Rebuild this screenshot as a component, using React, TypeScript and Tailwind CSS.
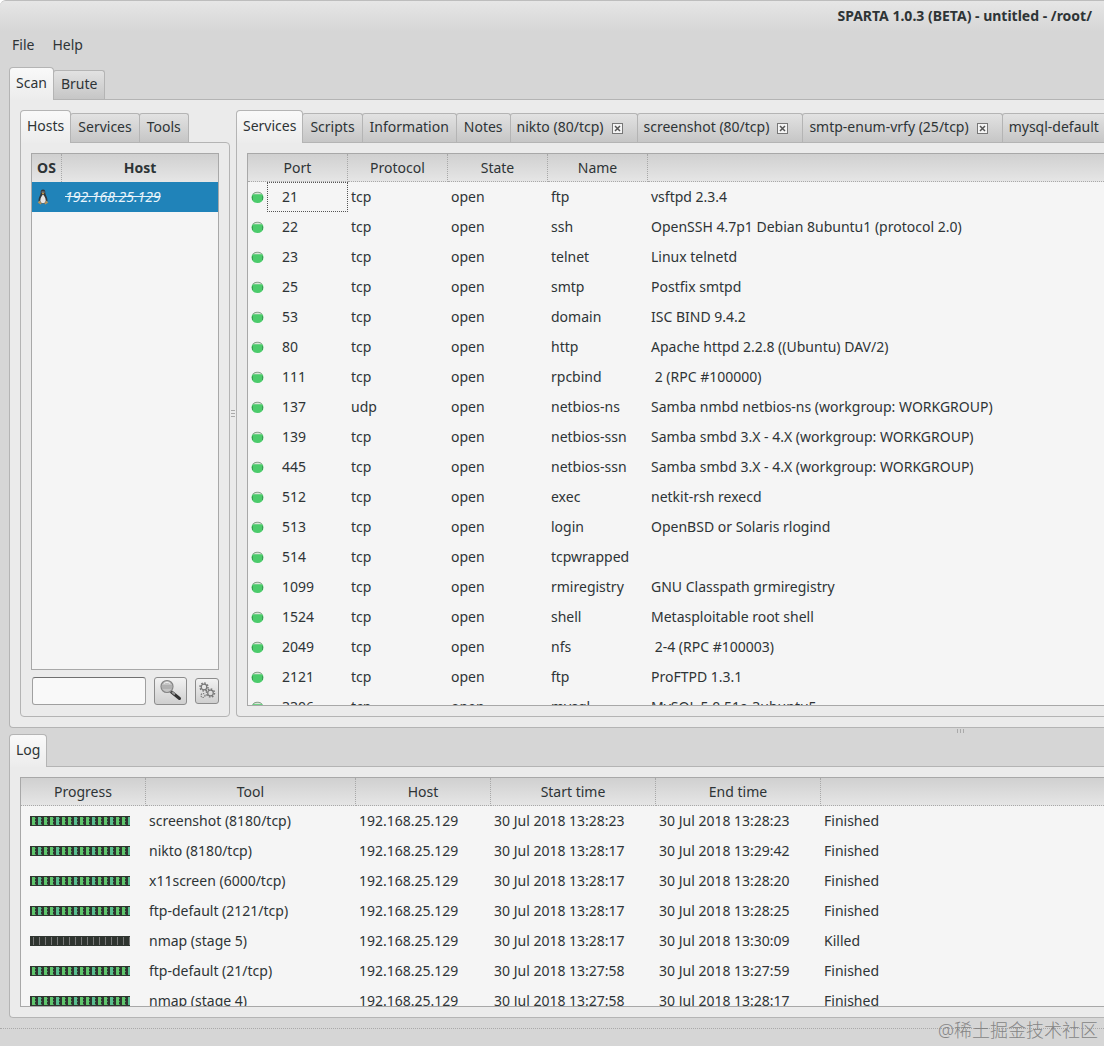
import React, { useState } from 'react';

type Service = { port: string; protocol: string; state: string; name: string; version: string };
type LogEntry = { tool: string; host: string; start: string; end: string; status: string };

const HOST = '192.168.25.129';

const services: Service[] = [
  { port: '21', protocol: 'tcp', state: 'open', name: 'ftp', version: 'vsftpd 2.3.4' },
  { port: '22', protocol: 'tcp', state: 'open', name: 'ssh', version: 'OpenSSH 4.7p1 Debian 8ubuntu1 (protocol 2.0)' },
  { port: '23', protocol: 'tcp', state: 'open', name: 'telnet', version: 'Linux telnetd' },
  { port: '25', protocol: 'tcp', state: 'open', name: 'smtp', version: 'Postfix smtpd' },
  { port: '53', protocol: 'tcp', state: 'open', name: 'domain', version: 'ISC BIND 9.4.2' },
  { port: '80', protocol: 'tcp', state: 'open', name: 'http', version: 'Apache httpd 2.2.8 ((Ubuntu) DAV/2)' },
  { port: '111', protocol: 'tcp', state: 'open', name: 'rpcbind', version: ' 2 (RPC #100000)' },
  { port: '137', protocol: 'udp', state: 'open', name: 'netbios-ns', version: 'Samba nmbd netbios-ns (workgroup: WORKGROUP)' },
  { port: '139', protocol: 'tcp', state: 'open', name: 'netbios-ssn', version: 'Samba smbd 3.X - 4.X (workgroup: WORKGROUP)' },
  { port: '445', protocol: 'tcp', state: 'open', name: 'netbios-ssn', version: 'Samba smbd 3.X - 4.X (workgroup: WORKGROUP)' },
  { port: '512', protocol: 'tcp', state: 'open', name: 'exec', version: 'netkit-rsh rexecd' },
  { port: '513', protocol: 'tcp', state: 'open', name: 'login', version: 'OpenBSD or Solaris rlogind' },
  { port: '514', protocol: 'tcp', state: 'open', name: 'tcpwrapped', version: '' },
  { port: '1099', protocol: 'tcp', state: 'open', name: 'rmiregistry', version: 'GNU Classpath grmiregistry' },
  { port: '1524', protocol: 'tcp', state: 'open', name: 'shell', version: 'Metasploitable root shell' },
  { port: '2049', protocol: 'tcp', state: 'open', name: 'nfs', version: ' 2-4 (RPC #100003)' },
  { port: '2121', protocol: 'tcp', state: 'open', name: 'ftp', version: 'ProFTPD 1.3.1' },
  { port: '3306', protocol: 'tcp', state: 'open', name: 'mysql', version: 'MySQL 5.0.51a-3ubuntu5' },
];

const logEntries: LogEntry[] = [
  { tool: 'screenshot (8180/tcp)', host: HOST, start: '30 Jul 2018 13:28:23', end: '30 Jul 2018 13:28:23', status: 'Finished' },
  { tool: 'nikto (8180/tcp)', host: HOST, start: '30 Jul 2018 13:28:17', end: '30 Jul 2018 13:29:42', status: 'Finished' },
  { tool: 'x11screen (6000/tcp)', host: HOST, start: '30 Jul 2018 13:28:17', end: '30 Jul 2018 13:28:20', status: 'Finished' },
  { tool: 'ftp-default (2121/tcp)', host: HOST, start: '30 Jul 2018 13:28:17', end: '30 Jul 2018 13:28:25', status: 'Finished' },
  { tool: 'nmap (stage 5)', host: HOST, start: '30 Jul 2018 13:28:17', end: '30 Jul 2018 13:30:09', status: 'Killed' },
  { tool: 'ftp-default (21/tcp)', host: HOST, start: '30 Jul 2018 13:27:58', end: '30 Jul 2018 13:27:59', status: 'Finished' },
  { tool: 'nmap (stage 4)', host: HOST, start: '30 Jul 2018 13:27:58', end: '30 Jul 2018 13:28:17', status: 'Finished' },
];

const serviceTabs = [
  { label: 'Services' },
  { label: 'Scripts' },
  { label: 'Information' },
  { label: 'Notes' },
  { label: 'nikto (80/tcp)', closable: true },
  { label: 'screenshot (80/tcp)', closable: true },
  { label: 'smtp-enum-vrfy (25/tcp)', closable: true },
  { label: 'mysql-default', closable: true },
];

type TabProps = { label: string; active?: boolean; closable?: boolean; onClick?: () => void };

const Tab: React.FC<TabProps> = ({ label, active, closable, onClick }) => (
  <div
    className={
      active
        ? 'relative z-10 -mb-px flex h-[33px] shrink-0 items-center gap-2 rounded-t-[4px] border border-b-0 border-[#b4b4b4] bg-linear-to-b from-[#f9f9f9] to-[#ececec] px-1.5 pb-0.5'
        : '-ml-px flex h-[29px] shrink-0 items-center gap-2 rounded-t-[3px] border border-b-0 border-[#b4b4b4] bg-linear-to-b from-[#e2e2e2] to-[#c6c6c6] px-1.5 pb-0.5'
    }
  >
    <button type="button" role="tab" aria-selected={!!active} onClick={onClick} className={closable || active ? 'whitespace-nowrap' : 'px-px whitespace-nowrap'}>
      {label}
    </button>
    {closable && (
      <button type="button" aria-label="Close" className="mt-0.5 mr-2 flex size-[11px] items-center justify-center border border-[#777] bg-[#f4f4f4]">
        <svg width="7" height="7" viewBox="0 0 7 7" fill="none" stroke="#555" strokeWidth="1.5">
          <path d="M1 1l5 5M6 1L1 6" />
        </svg>
      </button>
    )}
  </div>
);

const StatusDot = () => (
  <svg width="13" height="13" viewBox="0 0 13 13" className="shrink-0">
    <ellipse cx="6.5" cy="6.5" rx="6" ry="5.5" fill="#4bcb6b" />
    <path d="M2 3.2C3.5.6 9.500.6 11 3.2" fill="#d9e6d8" stroke="#8a9a8a" strokeWidth="1" />
    <path d="M1 5.500h1v1H1zM11 5.500h1v1h-1zM1 7.500h1v1H1zM11 7.500h1v1h-1z" fill="#2c6e3d" />
  </svg>
);

const Penguin = () => (
  <svg width="12" height="16" viewBox="0 0 12 16">
    <path d="M6 .5C4 .5 3.600 2 3.700 4 3.700 6 1.500 8 1.500 11.500L3 14.500h6l1.500-3C10.500 8 8.300 6 8.300 4 8.400 2 8 .5 6 .5z" fill="#34373a" />
    <path d="M6 5.500C4.500 7 3.300 9 3.300 11.500 3.300 13.500 4.500 14.200 6 14.200s2.700-.7 2.700-2.700C8.700 9 7.500 7 6 5.500z" fill="#e6e6e6" />
    <path d="M4.800 4.300L6 3.700l1.300.6L6 5.500z" fill="#d9a441" />
    <circle cx="5.200" cy="3" r=".6" fill="#ddd" />
    <circle cx="6.900" cy="3" r=".6" fill="#ddd" />
    <path d="M.7 13.500L2.700 11.500 4.700 14.700 3.500 15.500zM11.300 13.500L9.300 11.500 7.300 14.700 8.500 15.500z" fill="#b5935a" />
  </svg>
);

const Magnifier = () => (
  <svg width="24" height="24" viewBox="0 0 24 24">
    <path d="M12.500 13l8 6.500" stroke="#333" strokeWidth="3" strokeLinecap="round" />
    <path d="M13 13l3 2.600" stroke="#999" strokeWidth="2" />
    <circle cx="8" cy="7.500" r="6" fill="#c4c4c4" stroke="#858585" strokeWidth="1.200" />
    <path d="M3.500 7h9M3.500 9h9" stroke="#777" strokeDasharray="1 1" />
    <path d="M5 4.500c1.500-1.500 4.500-1.500 6 0" stroke="#efefef" fill="none" />
  </svg>
);

const Gears = () => (
  <svg width="18" height="18" viewBox="0 0 18 18" fill="none" stroke="#777">
    <circle cx="6" cy="5" r="4" strokeWidth="1.500" strokeDasharray="1.600 1.500" />
    <circle cx="6" cy="5" r="2.800" strokeWidth="1.200" />
    <circle cx="12.500" cy="11" r="4" strokeWidth="1.500" strokeDasharray="1.600 1.500" />
    <circle cx="12.500" cy="11" r="2.800" strokeWidth="1.200" />
    <circle cx="5" cy="13.500" r="2" strokeWidth="1.200" strokeDasharray="1.200 .9" />
  </svg>
);

const ProgressBar: React.FC<{ killed: boolean }> = ({ killed }) => (
  <svg width="100" height="10" viewBox="0 0 100 10" className="block">
    <rect width="100" height="10" fill="#2f3430" />
    {Array.from({ length: 17 }, (_, i) =>
      killed ? (
        <rect key={i} x={3 + i * 6} y="1" width="1" height="8" fill="#777" />
      ) : (
        <g key={i}>
          <rect x={2 + i * 6} y="1" width={i === 16 ? 2 : 3} height="8" fill={i % 3 === 1 ? '#58bd8e' : '#5fc56c'} />
          <path d={`M${5 + i * 6} 2.500h1M${5 + i * 6} 5.500h1M${5 + i * 6} 8.500h1`} stroke="#4b8f5c" />
        </g>
      )
    )}
  </svg>
);

const panel = 'border border-[#b4b4b4] bg-[#ebebeb] p-2.5';
const headCell = 'h-7 border-b border-r border-dotted border-[#a8a8a8] p-0 font-normal last:border-r-0';
const headRow = 'bg-linear-to-b from-[#d0d0d0] to-[#e6e6e6]';

const HostsPanel = () => {
  const [active, setActive] = useState('Hosts');
  return (
    <div className="flex w-[210px] shrink-0 flex-col">
      <div role="tablist" className="flex items-end">
        {['Hosts', 'Services', 'Tools'].map((label) => (
          <Tab key={label} label={label} active={active === label} onClick={() => setActive(label)} />
        ))}
      </div>
      <div className={`${panel} flex min-h-0 flex-1 flex-col rounded-b-[4px] rounded-tr-[4px]`}>
        <div className="min-h-0 flex-1 overflow-hidden border border-[#a8a8a8] bg-[#f5f5f5]">
          <table className="w-full table-fixed border-separate border-spacing-0">
            <colgroup>
              <col className="w-[30px]" />
              <col />
            </colgroup>
            <thead>
              <tr className={headRow}>
                <th className="h-7 border-r border-dotted border-[#a8a8a8] p-0 font-bold">OS</th>
                <th className="h-7 p-0 font-bold">Host</th>
              </tr>
            </thead>
            <tbody>
              <tr className="h-[30px] bg-[#2083b9] text-[#e8f4fb]">
                <td className="p-0 pl-[5px]"><Penguin /></td>
                <td className="p-0 pl-[3px] italic line-through">{HOST}</td>
              </tr>
            </tbody>
          </table>
        </div>
        <div className="mt-[7px] mb-px flex items-center justify-between pl-px">
          <input
            type="text"
            aria-label="Filter hosts"
            className="h-7 w-[114px] rounded-[3px] border border-[#a0a0a0] border-t-[#707070] bg-[#f9f9f9] px-2 outline-none"
          />
          <button type="button" aria-label="Search" className="flex h-7 w-[33px] items-center justify-center rounded-[3px] border border-[#8c8c8c] bg-linear-to-b from-[#f2f2f2] to-[#cfcfcf]">
            <Magnifier />
          </button>
          <button type="button" aria-label="Settings" className="flex h-[26px] w-6 items-center justify-center rounded-[3px] border border-[#8c8c8c] bg-linear-to-b from-[#f2f2f2] to-[#cfcfcf]">
            <Gears />
          </button>
        </div>
      </div>
    </div>
  );
};

const ServicesPanel = () => {
  const [active, setActive] = useState('Services');
  return (
    <div className="flex min-w-0 flex-1 flex-col">
      <div role="tablist" className="flex items-end">
        {serviceTabs.map((tab) => (
          <Tab key={tab.label} label={tab.label} closable={tab.closable} active={active === tab.label} onClick={() => setActive(tab.label)} />
        ))}
      </div>
      <div className={`${panel} flex min-h-0 flex-1 flex-col rounded-bl-[4px] border-r-0 pr-0`}>
        <div className="min-h-0 flex-1 overflow-hidden border border-r-0 border-[#a8a8a8] bg-[#f5f5f5]">
          <table className="w-full table-fixed border-separate border-spacing-0">
            <colgroup>
              <col className="w-[100px]" />
              <col className="w-[100px]" />
              <col className="w-[100px]" />
              <col className="w-[100px]" />
              <col />
            </colgroup>
            <thead>
              <tr className={headRow}>
                <th className={headCell}>Port</th>
                <th className={headCell}>Protocol</th>
                <th className={headCell}>State</th>
                <th className={headCell}>Name</th>
                <th className={headCell} aria-label="Version" />
              </tr>
            </thead>
            <tbody>
              {services.map((service, idx) => (
                <tr key={service.port} className="h-[30px]">
                  <td className="p-0">
                    <div className="flex items-center gap-1.5 pl-[3px]">
                      <StatusDot />
                      <span className={idx === 0 ? '-ml-[3px] flex h-[30px] flex-1 items-center border border-dotted border-[#555] pl-[14px]' : 'pl-3'}>
                        {service.port}
                      </span>
                    </div>
                  </td>
                  <td className="p-0 pl-[3px]">{service.protocol}</td>
                  <td className="p-0 pl-[3px]">{service.state}</td>
                  <td className="p-0 pl-[3px]">{service.name}</td>
                  <td className="whitespace-pre p-0 pl-[3px]">{service.version}</td>
                </tr>
              ))}
            </tbody>
          </table>
        </div>
      </div>
    </div>
  );
};

const LogPanel = () => (
  <section className="flex h-[284px] shrink-0 flex-col">
    <div role="tablist" className="flex items-end">
      <Tab label="Log" active />
    </div>
    <div className={`${panel} flex min-h-0 flex-1 flex-col rounded-bl-[4px] border-r-0 pr-0`}>
      <div className="min-h-0 flex-1 overflow-hidden border border-r-0 border-[#a8a8a8] bg-[#f5f5f5]">
        <table className="w-full table-fixed border-separate border-spacing-0">
          <colgroup>
            <col className="w-[125px]" />
            <col className="w-[210px]" />
            <col className="w-[135px]" />
            <col className="w-[165px]" />
            <col className="w-[165px]" />
            <col />
          </colgroup>
          <thead>
            <tr className={headRow}>
              <th className={headCell}>Progress</th>
              <th className={headCell}>Tool</th>
              <th className={headCell}>Host</th>
              <th className={headCell}>Start time</th>
              <th className={headCell}>End time</th>
              <th className={headCell} aria-label="Status" />
            </tr>
          </thead>
          <tbody>
            {logEntries.map((entry) => (
              <tr key={entry.tool} className="h-[30px]">
                <td className="p-0 pl-[9px]"><ProgressBar killed={entry.status === 'Killed'} /></td>
                <td className="p-0 pl-[3px]">{entry.tool}</td>
                <td className="p-0 pl-[3px]">{entry.host}</td>
                <td className="p-0 pl-[3px]">{entry.start}</td>
                <td className="p-0 pl-[3px]">{entry.end}</td>
                <td className="p-0 pl-[3px]">{entry.status}</td>
              </tr>
            ))}
          </tbody>
        </table>
      </div>
    </div>
  </section>
);

const App: React.FC = () => {
  const [active, setActive] = useState('Scan');

  return (
    <div className="relative flex h-screen flex-col overflow-hidden rounded-tl-[6px] border-t border-[#bdbdbd] bg-[#d6d6d6] font-['Noto_Sans',sans-serif] text-[14px] leading-5 text-[#2e3436]">
      <header className="flex h-[30px] shrink-0 items-center justify-end bg-linear-to-b from-[#e6e6e6] to-[#d6d6d6] pr-3">
        <h1 className="font-bold">SPARTA 1.0.3 (BETA) - untitled - /root/</h1>
      </header>
      <nav className="flex h-9 shrink-0 items-start gap-[18px] px-3 pt-1">
        <button type="button">File</button>
        <button type="button">Help</button>
      </nav>

      <main className="flex min-h-0 flex-1 flex-col pl-[9px]">
        <section className="flex min-h-0 flex-1 flex-col">
          <div role="tablist" className="flex items-end">
            {['Scan', 'Brute'].map((label) => (
              <Tab key={label} label={label} active={active === label} onClick={() => setActive(label)} />
            ))}
          </div>
          <div className={`${panel} flex min-h-0 flex-1 rounded-bl-[4px] border-r-0 pr-0`}>
            <HostsPanel />
            <div className="flex w-1.5 shrink-0 flex-col items-center justify-center gap-0.5">
              <span className="h-px w-1 bg-[#aaa]" />
              <span className="h-px w-1 bg-[#aaa]" />
              <span className="h-px w-1 bg-[#aaa]" />
            </div>
            <ServicesPanel />
          </div>
        </section>
        <div className="flex h-1.5 shrink-0 items-center justify-end gap-0.5 pr-35">
          <span className="h-1 w-px bg-[#aaa]" />
          <span className="h-1 w-px bg-[#aaa]" />
          <span className="h-1 w-px bg-[#aaa]" />
        </div>
        <LogPanel />
      </main>

      <footer className="mt-2.5 h-[18px] shrink-0 border-t border-dotted border-[#aaa]" />
      <p className="absolute right-1.5 bottom-0.5 font-['Noto_Sans','Noto_Sans_CJK_SC',sans-serif] text-[18px] font-light leading-7 text-[#858585]">@稀土掘金技术社区</p>
    </div>
  );
};

export default App;
